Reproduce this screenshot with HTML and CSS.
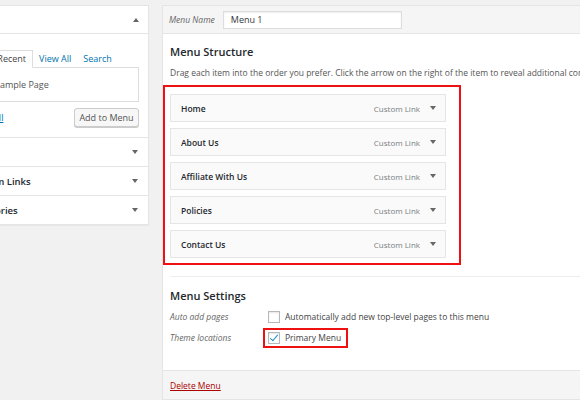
FILE: index.html
```html
<!DOCTYPE html>
<html lang="en">

<head>
    <meta charset="UTF-8">
    <meta name="viewport" content="width=device-width, initial-scale=1.0">
    <title>Menus</title>
    <link rel="stylesheet" href="styles.css">
</head>

<body>
    <div class="screen">
        <aside class="side">
            <div class="side-head"><span class="tri tri-up"></span></div>
            <div class="side-body">
                <div class="tabs">
                    <span class="tab active">Most Recent</span>
                    <a class="tab">View All</a>
                    <a class="tab">Search</a>
                </div>
                <div class="tab-panel">Sample Page</div>
                <div class="side-actions">
                    <a class="select-all">Select All</a>
                    <button class="btn">Add to Menu</button>
                </div>
            </div>
            <div class="section">Posts<span class="tri"></span></div>
            <div class="section">Custom Links<span class="tri"></span></div>
            <div class="section">Categories<span class="tri"></span></div>
        </aside>

        <main class="editor">
            <div class="editor-head">
                <label class="field-label" for="menuName">Menu Name</label>
                <input class="name-input" type="text" id="menuName" value="Menu 1">
            </div>

            <div class="editor-body">
                <h3>Menu Structure</h3>
                <p class="desc">Drag each item into the order you prefer. Click the arrow on the right of the item to reveal additional configuration options.</p>

                <div class="highlight menu-list">
                    <div class="menu-item"><span class="item-title">Home</span><span class="item-type">Custom Link</span><span class="tri"></span></div>
                    <div class="menu-item"><span class="item-title">About Us</span><span class="item-type">Custom Link</span><span class="tri"></span></div>
                    <div class="menu-item"><span class="item-title">Affiliate With Us</span><span class="item-type">Custom Link</span><span class="tri"></span></div>
                    <div class="menu-item"><span class="item-title">Policies</span><span class="item-type">Custom Link</span><span class="tri"></span></div>
                    <div class="menu-item"><span class="item-title">Contact Us</span><span class="item-type">Custom Link</span><span class="tri"></span></div>
                </div>

                <div class="settings">
                    <h3>Menu Settings</h3>
                    <div class="setting-row">
                        <span class="field-label">Auto add pages</span>
                        <label class="check"><span class="box"></span>Automatically add new top-level pages to this menu</label>
                    </div>
                    <div class="setting-row">
                        <span class="field-label">Theme locations</span>
                        <label class="check highlight-small"><span class="box checked"></span>Primary Menu</label>
                    </div>
                </div>
            </div>

            <div class="editor-foot">
                <a class="delete">Delete Menu</a>
            </div>
        </main>
    </div>
</body>

</html>
```

FILE: styles.css
```css
body {
    margin: 0;
    background-color: #f1f1f1;
    font-family: "Open Sans", "Liberation Sans", sans-serif;
    font-size: 8.5px;
    color: #444;
    overflow: hidden;
}

.screen {
    display: flex;
    align-items: flex-start;
    gap: 13px;
    padding-top: 5px;
    width: 700px;
}

/* left column */
.side {
    flex: 0 0 187px;
    margin-left: -38px;
    background-color: #fff;
    border: 1px solid #e5e5e5;
    box-shadow: 0 1px 1px rgba(0, 0, 0, 0.04);
    box-sizing: border-box;
}

.side-head {
    height: 27px;
    border-bottom: 1px solid #e5e5e5;
    display: flex;
    align-items: center;
    justify-content: flex-end;
    padding-right: 9px;
}

.side-body {
    padding: 16px 9px 10px 10px;
    border-bottom: 1px solid #e5e5e5;
}

.tabs {
    display: flex;
    margin-left: -6px;
    height: 17px;
    align-items: stretch;
    line-height: 17px;
    font-size: 9px;
}

.tab {
    padding: 0 6px;
    color: #0073aa;
}

.tab.active {
    color: #444;
    border: 1px solid #ddd;
    border-bottom: 1px solid #fff;
    background-color: #fff;
    line-height: 16px;
    margin-bottom: -1px;
    position: relative;
}

.tab-panel {
    border: 1px solid #ddd;
    height: 33px;
    line-height: 33px;
    padding-left: 21px;
    font-size: 9px;
    color: #555;
}

.side-actions {
    display: flex;
    justify-content: space-between;
    align-items: center;
    margin-top: 6px;
}

.select-all {
    color: #0073aa;
    text-decoration: underline;
    font-size: 9px;
    margin-left: -7px;
}

.btn {
    font-family: inherit;
    font-size: 9px;
    color: #555;
    background-color: #f7f7f7;
    border: 1px solid #ccc;
    border-radius: 3px;
    box-shadow: 0 1px 0 #ccc;
    height: 19px;
    width: 65px;
    padding: 0;
}

.section {
    height: 28px;
    border-bottom: 1px solid #e5e5e5;
    display: flex;
    align-items: center;
    justify-content: space-between;
    padding: 0 10px 0 6px;
    font-size: 9.5px;
    font-weight: 600;
    color: #23282d;
}

.section:last-child {
    border-bottom: none;
}

.tri {
    width: 0;
    height: 0;
    border-left: 3px solid transparent;
    border-right: 3px solid transparent;
    border-top: 4px solid #666;
}

.tri-up {
    border-top: none;
    border-bottom: 4px solid #666;
}

/* right column */
.editor {
    flex: 0 0 520px;
    background-color: #fff;
    border: 1px solid #e5e5e5;
    box-sizing: border-box;
}

.editor-head {
    height: 27px;
    background-color: #f5f5f5;
    border-bottom: 1px solid #e5e5e5;
    display: flex;
    align-items: center;
    padding-left: 6px;
}

.field-label {
    font-style: italic;
    color: #666;
    font-size: 8.5px;
}

.name-input {
    margin-left: 8px;
    width: 179px;
    height: 18px;
    box-sizing: border-box;
    border: 1px solid #ddd;
    box-shadow: inset 0 1px 2px rgba(0, 0, 0, 0.07);
    font-family: inherit;
    font-size: 9px;
    color: #32373c;
    padding: 0 7px;
}

.editor-body {
    padding: 11px 0 22px 7px;
}

h3 {
    margin: 0;
    font-size: 11px;
    line-height: 14px;
    font-weight: 600;
    color: #23282d;
}

.desc {
    margin: 8px 0 0;
    line-height: 12px;
    white-space: nowrap;
    color: #555;
}

.highlight {
    border: 2px solid #ee1111;
}

.menu-list {
    margin: 6px 0 0 -7px;
    width: 298px;
    box-sizing: border-box;
    padding: 7px 13px 5px 5px;
    display: flex;
    flex-direction: column;
    gap: 6px;
}

.menu-item {
    height: 28px;
    box-sizing: border-box;
    background-color: #fafafa;
    border: 1px solid #e5e5e5;
    display: flex;
    align-items: center;
    padding: 0 9px 0 10px;
}

.item-title {
    flex: 1;
    font-weight: 600;
    color: #23282d;
}

.item-type {
    font-size: 8px;
    color: #787c82;
    margin-right: 10px;
}

.settings {
    margin-top: 11px;
    border-top: 1px solid #eee;
    padding-top: 12px;
}

.settings h3 {
    margin-bottom: 3px;
}

.setting-row {
    display: flex;
    align-items: center;
    height: 21px;
}

.setting-row .field-label {
    width: 98px;
}

.check {
    display: inline-flex;
    align-items: center;
    gap: 5px;
    color: #444;
}

.highlight-small {
    border: 2px solid #ee1111;
    margin-left: -5px;
    padding: 2px 5px 2px 3px;
}

.box {
    width: 12px;
    height: 12px;
    box-sizing: border-box;
    border: 1px solid #b4b9be;
    background-color: #fff;
    box-shadow: inset 0 1px 2px rgba(0, 0, 0, 0.1);
    position: relative;
}

.box.checked::after {
    content: "";
    position: absolute;
    left: 3px;
    top: 0;
    width: 3px;
    height: 7px;
    border-right: 1.5px solid #1e8cbe;
    border-bottom: 1.5px solid #1e8cbe;
    transform: rotate(40deg);
}

.editor-foot {
    height: 28px;
    background-color: #f5f5f5;
    border-top: 1px solid #e5e5e5;
    display: flex;
    align-items: center;
    padding-left: 7px;
}

.delete {
    color: #a00;
    text-decoration: underline;
    font-size: 8.5px;
}
```
